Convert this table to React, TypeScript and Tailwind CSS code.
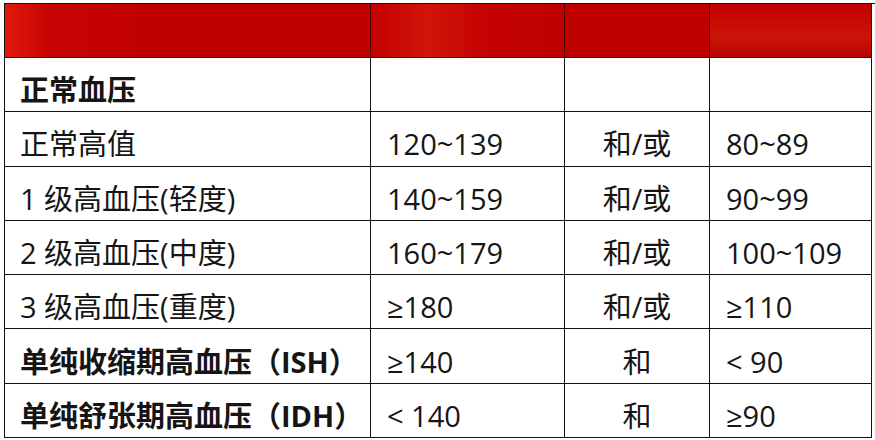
const rows = [
  { name: "正常血压", sys: "", op: "", dia: "", bold: true },
  { name: "正常高值", sys: "120~139", op: "和/或", dia: "80~89", bold: false },
  { name: "1 级高血压(轻度)", sys: "140~159", op: "和/或", dia: "90~99", bold: false },
  { name: "2 级高血压(中度)", sys: "160~179", op: "和/或", dia: "100~109", bold: false },
  { name: "3 级高血压(重度)", sys: "≥180", op: "和/或", dia: "≥110", bold: false },
  { name: "单纯收缩期高血压（ISH）", sys: "≥140", op: "和", dia: "< 90", bold: true },
  { name: "单纯舒张期高血压（IDH）", sys: "< 140", op: "和", dia: "≥90", bold: true },
];

const cell = "border-r-[1.5px] border-b-[1.5px] border-[#111] flex items-center pt-[10px]";

export default function App() {
  return (
    <div className="w-[875px] h-[440px] bg-white pl-[4px] pt-[3px]" style={{ fontFamily: "'Open Sans', 'Noto Sans CJK SC', sans-serif" }}>
      <div className="grid grid-cols-[366px_194px_145px_162px] grid-rows-[54px_repeat(7,54.3px)] border-l-[1.5px] border-t-[1.5px] border-[#111] text-[29px] text-[#151515] leading-none">
        {/* header */}
        <div className="border-r-[1.5px] border-b-[1.5px] border-[#4a0000] bg-[linear-gradient(90deg,#e01a0a_0%,#c80404_12%,#c00000_40%,#c00000_100%)]" />
        <div className="border-r-[1.5px] border-b-[1.5px] border-[#4a0000] bg-[linear-gradient(90deg,#c20000_0%,#d2150a_30%,#c40202_60%,#c00000_100%)]" />
        <div className="border-r-[1.5px] border-b-[1.5px] border-[#4a0000] bg-[#c00000]" />
        <div className="border-r-[1.5px] border-b-[1.5px] border-[#4a0000] bg-[linear-gradient(180deg,#c00000_0%,#cc1408_60%,#b80606_100%)]" />

        {rows.map((r) => (
          <div key={r.name} className="contents">
            <div className={`${cell} pl-[15px] ${r.bold ? "font-bold" : ""}`}>{r.name}</div>
            <div className={`${cell} pl-[16px]`}>{r.sys}</div>
            <div className={`${cell} justify-center`}>{r.op}</div>
            <div className={`${cell} pl-[16px]`}>{r.dia}</div>
          </div>
        ))}
      </div>
    </div>
  );
}
